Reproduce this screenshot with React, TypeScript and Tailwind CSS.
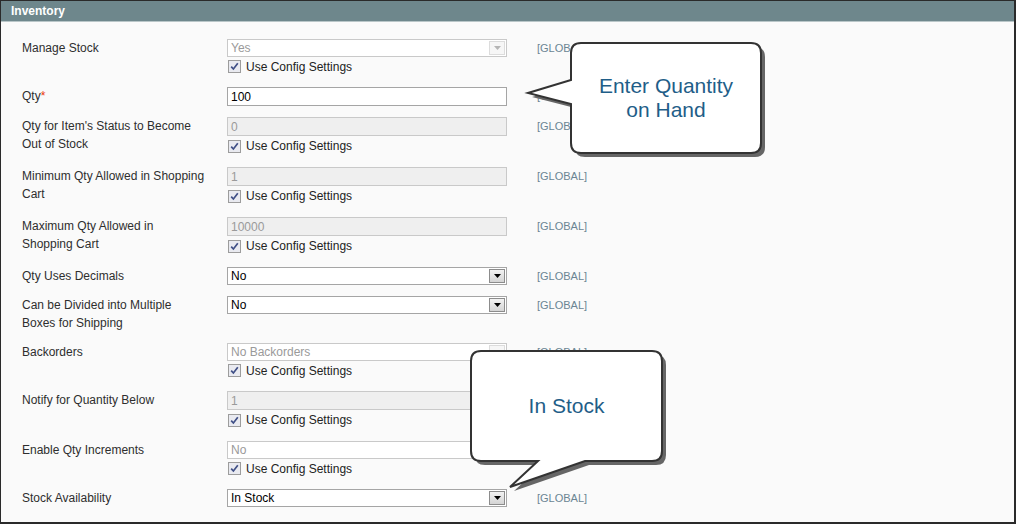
type Field = {
  label: string;
  required?: boolean;
  kind: 'select' | 'input';
  value: string;
  disabled?: boolean;
  config?: boolean;
};

const fields: Field[] = [
  { label: 'Manage Stock', kind: 'select', value: 'Yes', disabled: true, config: true },
  { label: 'Qty', required: true, kind: 'input', value: '100' },
  { label: "Qty for Item's Status to Become Out of Stock", kind: 'input', value: '0', disabled: true, config: true },
  { label: 'Minimum Qty Allowed in Shopping Cart', kind: 'input', value: '1', disabled: true, config: true },
  { label: 'Maximum Qty Allowed in Shopping Cart', kind: 'input', value: '10000', disabled: true, config: true },
  { label: 'Qty Uses Decimals', kind: 'select', value: 'No' },
  { label: 'Can be Divided into Multiple Boxes for Shipping', kind: 'select', value: 'No' },
  { label: 'Backorders', kind: 'select', value: 'No Backorders', disabled: true, config: true },
  { label: 'Notify for Quantity Below', kind: 'input', value: '1', disabled: true, config: true },
  { label: 'Enable Qty Increments', kind: 'select', value: 'No', disabled: true, config: true },
  { label: 'Stock Availability', kind: 'select', value: 'In Stock' },
];

const SelectBox = ({ value, disabled }: { value: string; disabled?: boolean }) => (
  <div
    className={`flex items-center h-[18px] w-[280px] border bg-white ${
      disabled ? 'border-[#c9c9c9] text-[#9a9a9a]' : 'border-[#a5a5a5] text-black'
    }`}
  >
    <span className="flex-1 pl-[3px] leading-[16px]">{value}</span>
    <span
      className={`flex items-center justify-center w-[16px] h-[14px] mr-[1px] border ${
        disabled ? 'border-[#dcdcdc] bg-[#f6f6f6]' : 'border-[#8c8c8c] bg-gradient-to-b from-[#f2f2f2] to-[#d4d4d4]'
      }`}
    >
      <svg width="7" height="4" viewBox="0 0 7 4">
        <path d="M0 0h7L3.5 4z" fill={disabled ? '#b5b5b5' : '#000'} />
      </svg>
    </span>
  </div>
);

const InputBox = ({ value, disabled }: { value: string; disabled?: boolean }) => (
  <div
    className={`flex items-center h-[19px] w-[280px] border pl-[3px] ${
      disabled ? 'border-[#c9c9c9] bg-[#efefef] text-[#9a9a9a]' : 'border-[#a5a5a5] bg-white text-black'
    }`}
  >
    {value}
  </div>
);

const ConfigCheck = ({ tall }: { tall?: boolean }) => (
  <div className={`flex items-center pl-[1px] ${tall ? 'h-[20px]' : 'h-[19px]'}`}>
    <span className="flex items-center justify-center w-[13px] h-[13px] border border-[#9c9c9c] bg-[#e9eaf0]">
      <svg width="9" height="9" viewBox="0 0 9 9">
        <path d="M1.2 4.6l2.2 2.4L7.8 1.3" fill="none" stroke="#3f4f86" strokeWidth="1.7" />
      </svg>
    </span>
    <span className="ml-[5px] text-[#222]">Use Config Settings</span>
  </div>
);

export default function App() {
  return (
    <div
      className="relative w-[1016px] h-[524px] overflow-hidden bg-[#fafafa] border-t border-l border-r-2 border-b-2 border-[#2a2a2a] text-[12px] leading-[18px] text-[#2e2e2e]"
      style={{ fontFamily: '"Liberation Sans", Arial, sans-serif' }}
    >
      <div className="h-[21px] bg-[#6e878c] border-b border-[#b9c6c8] flex items-center pl-[10px]">
        <span className="text-white font-bold text-[12px]">Inventory</span>
      </div>

      <div className="pt-[17px]">
        {fields.map((f) => (
          <div key={f.label} className="flex pb-[11px]">
            <div className="w-[226px] pl-[21px] pr-[20.5px]">
              {f.label}
              {f.required && <span className="text-[#eb340a]">*</span>}
            </div>
            <div className="w-[280px]">
              {f.kind === 'select' ? (
                <SelectBox value={f.value} disabled={f.disabled} />
              ) : (
                <InputBox value={f.value} disabled={f.disabled} />
              )}
              {f.config && <ConfigCheck tall={f.kind === 'input'} />}
            </div>
            <div className="ml-[30px] text-[11px] text-[#6b8593]">[GLOBAL]</div>
          </div>
        ))}
      </div>

      {/* callouts */}
      <svg className="absolute left-[-1px] top-[-1px] pointer-events-none" width="1016" height="524">
        <path
          transform="translate(4 4)"
          fill="#666"
          d="M581,43 H751 Q761,43 761,53 V143 Q761,153 751,153 H581 Q571,153 571,143 V104 L528,93 L571,80 V53 Q571,43 581,43 Z"
        />
        <path
          fill="#fff"
          stroke="#333"
          strokeWidth="2"
          d="M581,43 H751 Q761,43 761,53 V143 Q761,153 751,153 H581 Q571,153 571,143 V104 L528,93 L571,80 V53 Q571,43 581,43 Z"
        />
        <path
          transform="translate(4 4)"
          fill="#666"
          d="M481,351 H652 Q662,351 662,361 V451 Q662,461 652,461 H585 L510,487 L538,461 H481 Q471,461 471,451 V361 Q471,351 481,351 Z"
        />
        <path
          fill="#fff"
          stroke="#333"
          strokeWidth="2"
          d="M481,351 H652 Q662,351 662,361 V451 Q662,461 652,461 H585 L510,487 L538,461 H481 Q471,461 471,451 V361 Q471,351 481,351 Z"
        />
      </svg>
      <div className="absolute left-[570px] top-[42px] w-[190px] h-[110px] flex items-center justify-center text-center text-[21px] leading-[24px] text-[#1f5e88]">
        Enter Quantity
        <br />
        on Hand
      </div>
      <div className="absolute left-[470px] top-[350px] w-[191px] h-[110px] flex items-center justify-center text-[21px] leading-[24px] text-[#1f5e88]">
        In Stock
      </div>
    </div>
  );
}
